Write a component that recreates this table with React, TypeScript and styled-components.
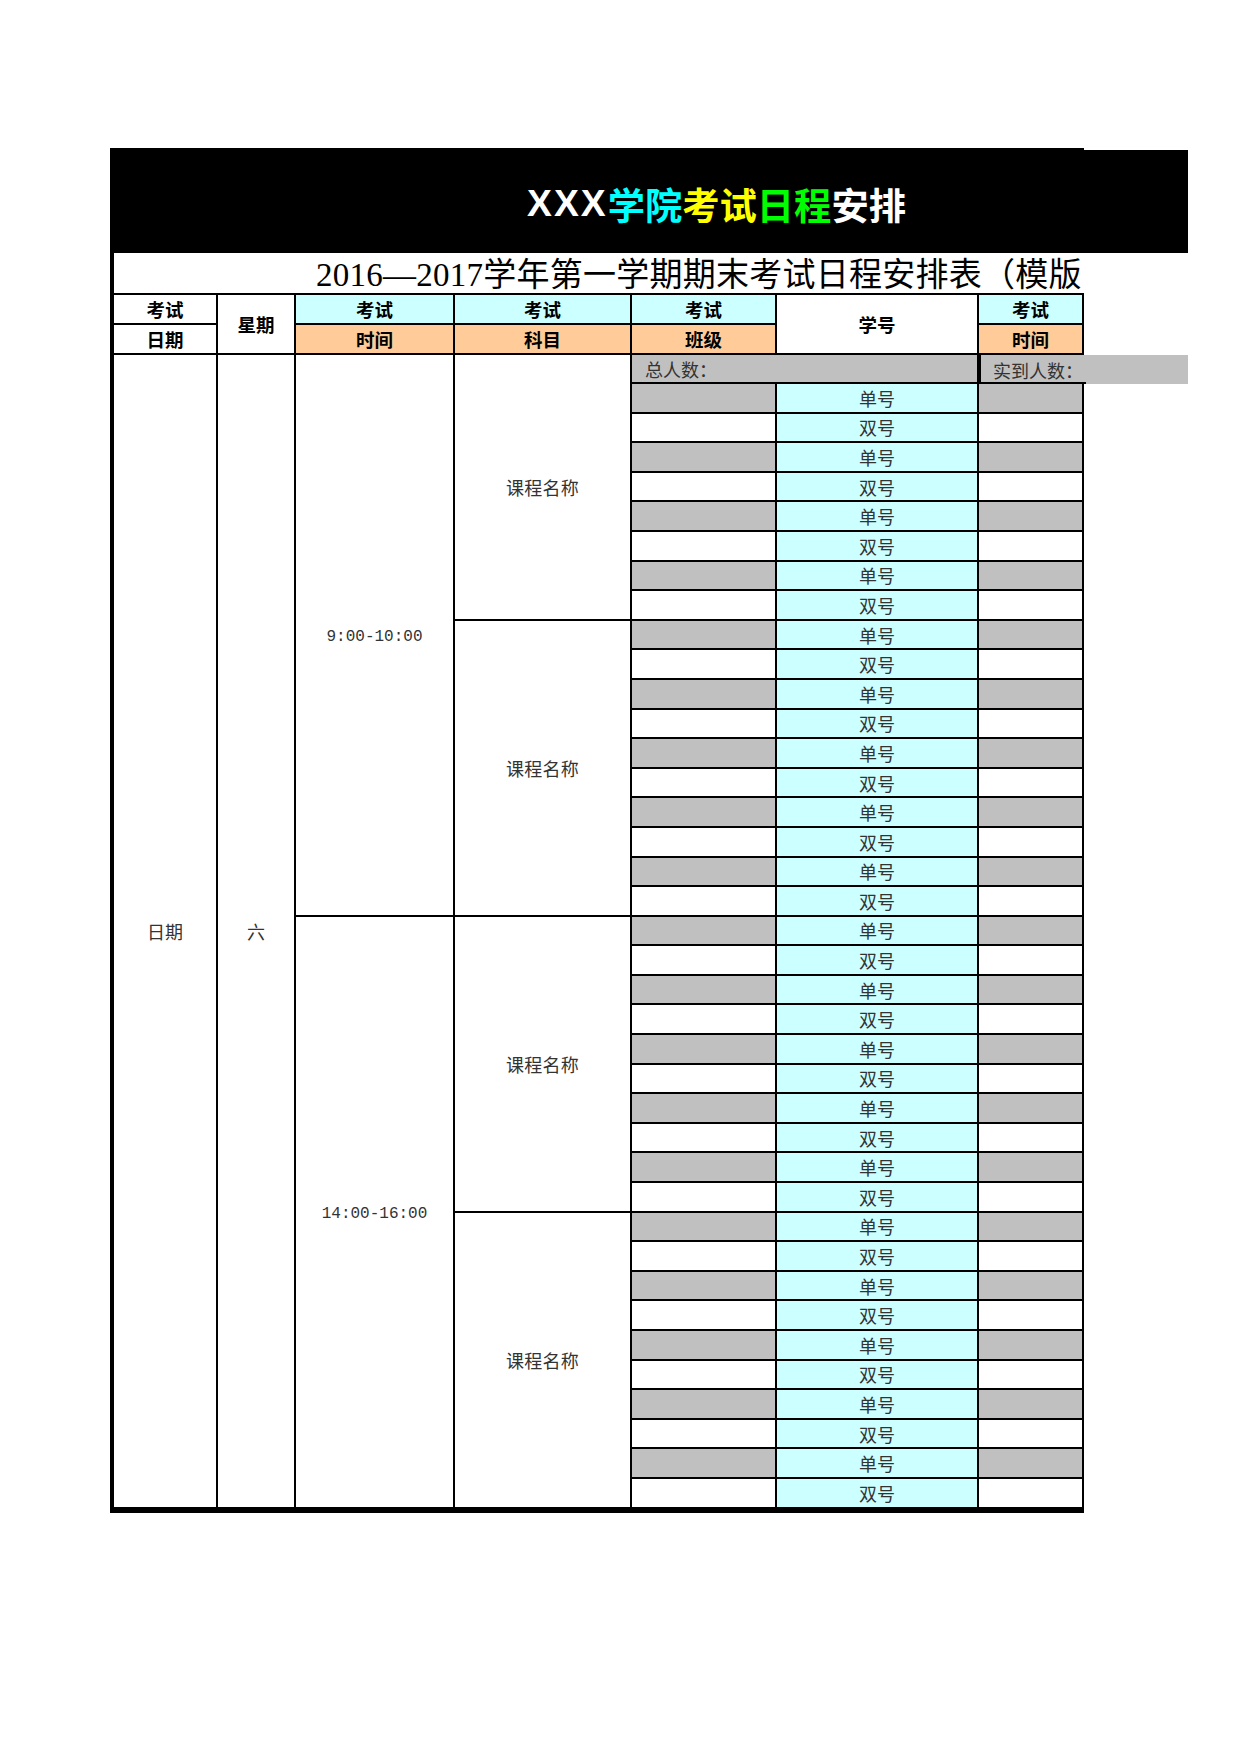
import React from 'react';
import styled, { createGlobalStyle } from 'styled-components';

const GlobalStyle = createGlobalStyle`
  html, body {
    margin: 0;
    padding: 0;
    background: #fff;
  }
  body {
    font-family: "Noto Sans CJK SC", "Liberation Sans", sans-serif;
  }
`;

type Fill = 'white' | 'cyan' | 'orange' | 'gray';

const fills: Record<Fill, string> = {
  white: '#ffffff',
  cyan: '#ccffff',
  orange: '#ffcc99',
  gray: '#c0c0c0',
};

const Page = styled.div`
  width: 1240px;
  min-height: 1754px;
  padding: 148px 0 0 110px;
  box-sizing: border-box;
`;

const Banner = styled.div`
  display: flex;
  height: 105px;
`;

const BannerMain = styled.div`
  width: 974px;
  background: #000;
  display: flex;
  align-items: center;
  padding: 6px 0 0 417px;
  box-sizing: border-box;
  font-family: "Liberation Sans", "Noto Sans CJK SC", sans-serif;
  font-weight: 700;
  font-size: 37.3px;
  white-space: nowrap;
`;

const BannerTail = styled.div`
  width: 104px;
  margin-top: 2px;
  background: #000;
`;

const Word = styled.span<{ $color: string; $spread?: boolean }>`
  color: ${(p) => p.$color};
  letter-spacing: ${(p) => (p.$spread ? '2px' : '0')};
`;

const Sheet = styled.div`
  display: grid;
  grid-template-columns: 108px 78px 159px 177px 145px 202px 105px 104px;
  grid-template-rows: 42px 30px 30px 29px repeat(38, 29.6px) 4px;
`;

interface CellProps {
  $row: string;
  $col: string;
  $fill?: Fill;
  $first?: boolean;
}

const Cell = styled.div<CellProps>`
  grid-row: ${(p) => p.$row};
  grid-column: ${(p) => p.$col};
  box-sizing: border-box;
  display: flex;
  align-items: center;
  justify-content: center;
  min-width: 0;
  background: ${(p) => fills[p.$fill || 'white']};
  border-right: 2px solid #000;
  border-bottom: 2px solid #000;
  border-left: ${(p) => (p.$first ? '4px solid #000' : 'none')};
  font-size: 18px;
  color: #333;
  white-space: nowrap;
`;

const TitleCell = styled(Cell)`
  justify-content: flex-start;
  border-right: none;
  overflow: hidden;
  padding: 0 0 2px 202px;
  font-family: "Liberation Serif", "Noto Sans CJK SC", serif;
  font-size: 33px;
  letter-spacing: 0.25px;
  color: #000;
`;

const HeadCell = styled(Cell)`
  font-weight: 700;
  font-size: 18.5px;
  color: #000;
`;

const CountCell = styled(Cell)<{ $tail?: boolean }>`
  justify-content: flex-start;
  padding-left: ${(p) => (p.$tail ? '12px' : '13px')};
  border-left: ${(p) => (p.$tail ? '2px solid #000' : 'none')};
  border-right: ${(p) => (p.$tail ? 'none' : '2px solid #000')};
  border-bottom: ${(p) => (p.$tail ? 'none' : '2px solid #000')};
  position: relative;
  &::after {
    content: '';
    display: ${(p) => (p.$tail ? 'block' : 'none')};
    position: absolute;
    left: -2px;
    bottom: 0;
    width: 107px;
    height: 2px;
    background: #000;
  }
`;

const TimeCell = styled(Cell)`
  font-family: "Liberation Mono", monospace;
  font-size: 16px;
  padding-top: 4px;
`;

const CourseCell = styled(Cell)`
  letter-spacing: 0.2px;
`;

const BottomRule = styled.div`
  grid-row: 43;
  grid-column: 1 / 8;
  background: #000;
`;

const headTop: [string, Fill][] = [
  ['3', 'cyan'],
  ['4', 'cyan'],
  ['5', 'cyan'],
  ['7', 'cyan'],
];

const headBottom: [string, string][] = [
  ['3', '时间'],
  ['4', '科目'],
  ['5', '班级'],
  ['7', '时间'],
];

const courses = ['4 / 13', '13 / 23', '23 / 33', '33 / 43'];

const App: React.FC = () => {
  const rows = Array.from({ length: 38 }, (_, i) => i);
  return (
    <Page>
      <GlobalStyle />
      <Banner>
        <BannerMain>
          <Word $color="#ffffff" $spread>XXX</Word>
          <Word $color="#00ffff">学院</Word>
          <Word $color="#ffff00">考试</Word>
          <Word $color="#00ff00">日程</Word>
          <Word $color="#ffffff">安排</Word>
        </BannerMain>
        <BannerTail />
      </Banner>
      <Sheet>
        <TitleCell $row="1" $col="1 / 8" $first>
          2016—2017学年第一学期期末考试日程安排表（模版
        </TitleCell>

        <HeadCell $row="2" $col="1" $first>考试</HeadCell>
        <HeadCell $row="3" $col="1" $first>日期</HeadCell>
        <HeadCell $row="2 / 4" $col="2">星期</HeadCell>
        {headTop.map(([col, fill]) => (
          <HeadCell key={'t' + col} $row="2" $col={col} $fill={fill}>考试</HeadCell>
        ))}
        {headBottom.map(([col, label]) => (
          <HeadCell key={'b' + col} $row="3" $col={col} $fill="orange">{label}</HeadCell>
        ))}
        <HeadCell $row="2 / 4" $col="6">学号</HeadCell>

        <Cell $row="4 / 43" $col="1" $first>日期</Cell>
        <Cell $row="4 / 43" $col="2">六</Cell>
        <TimeCell $row="4 / 23" $col="3">9:00-10:00</TimeCell>
        <TimeCell $row="23 / 43" $col="3">14:00-16:00</TimeCell>
        {courses.map((r) => (
          <CourseCell key={r} $row={r} $col="4">课程名称</CourseCell>
        ))}

        <CountCell $row="4" $col="5 / 7" $fill="gray">总人数：</CountCell>
        <CountCell $row="4" $col="7 / 9" $fill="gray" $tail>实到人数：</CountCell>

        {rows.map((i) => {
          const odd = i % 2 === 0;
          const row = String(i + 5);
          return (
            <React.Fragment key={i}>
              <Cell $row={row} $col="5" $fill={odd ? 'gray' : 'white'} />
              <Cell $row={row} $col="6" $fill="cyan">{odd ? '单号' : '双号'}</Cell>
              <Cell $row={row} $col="7" $fill={odd ? 'gray' : 'white'} />
            </React.Fragment>
          );
        })}
        <BottomRule />
      </Sheet>
    </Page>
  );
};

export default App;
